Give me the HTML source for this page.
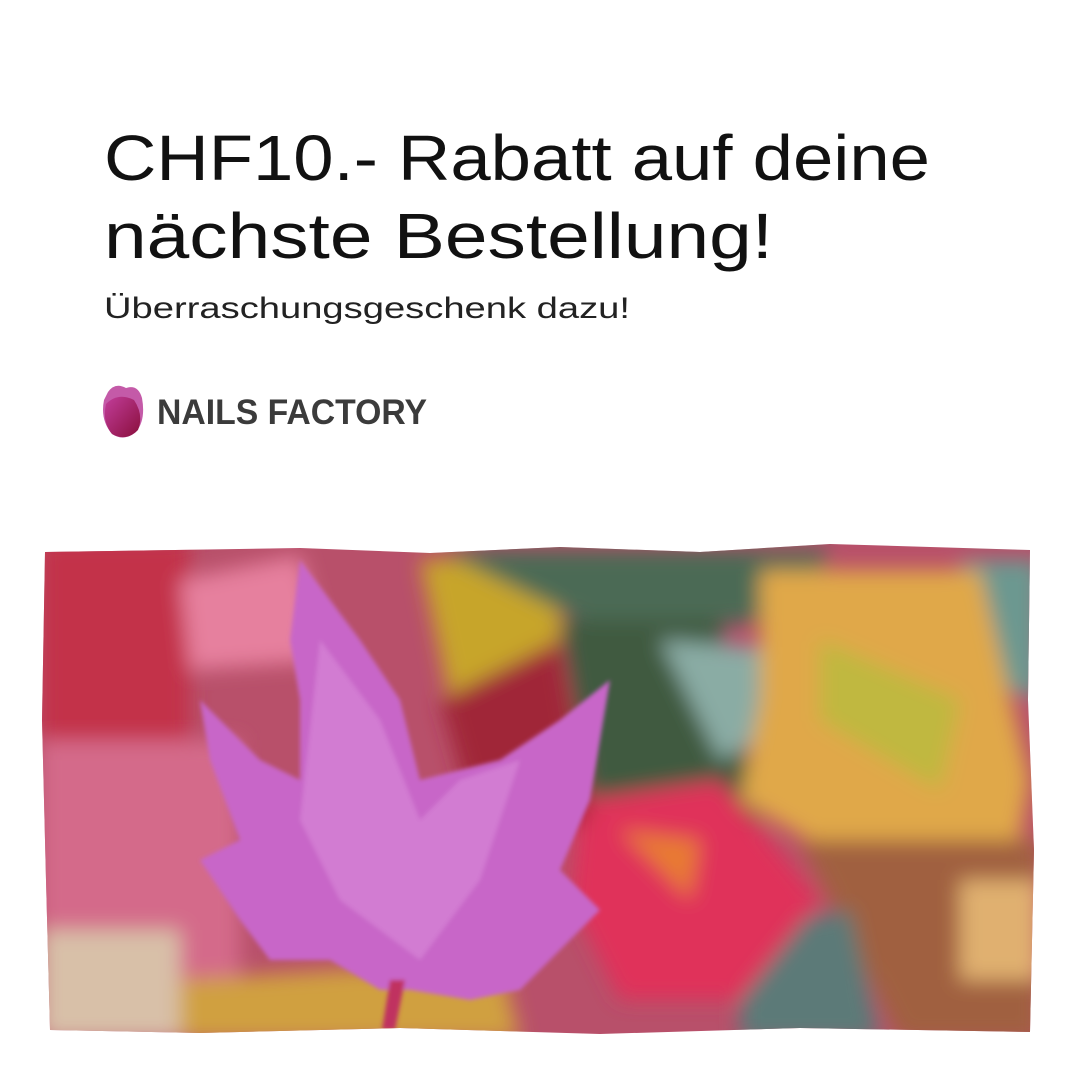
<!DOCTYPE html>
<html><head><meta charset="utf-8"><style>
html,body{margin:0;padding:0;background:#fff;}
body{width:1080px;height:1080px;overflow:hidden;position:relative;font-family:"Liberation Sans",sans-serif;}
svg{position:absolute;left:0;top:0;}
</style></head><body>
<svg width="1080" height="1080" viewBox="0 0 1080 1080">
<defs>
<filter id="b"><feGaussianBlur stdDeviation="10"/></filter>
<filter id="b2"><feGaussianBlur stdDeviation="2"/></filter>
<linearGradient id="lg" x1="0" y1="0" x2="1" y2="1"><stop offset="0" stop-color="#c13d9a"/><stop offset="1" stop-color="#8a0f3c"/></linearGradient>
<clipPath id="cp"><path d="M45 552 L300 548 L430 553 L560 547 L700 552 L830 544 L1030 550 L1028 700 L1034 850 L1030 1032 L800 1028 L600 1034 L400 1028 L200 1033 L50 1030 L46 880 L42 720 Z"/></clipPath>
</defs>
<text x="104" y="180" font-size="64" fill="#111" textLength="826" lengthAdjust="spacingAndGlyphs">CHF10.- Rabatt auf deine</text>
<text x="104" y="258" font-size="64" fill="#111" textLength="669" lengthAdjust="spacingAndGlyphs">nächste Bestellung!</text>
<text x="104" y="318" font-size="30" fill="#222" textLength="526" lengthAdjust="spacingAndGlyphs">Überraschungsgeschenk dazu!</text>
<g>
<path d="M108 392 Q115 382 126 388 Q138 384 142 398 Q146 420 136 432 Q124 442 112 434 Q100 420 104 400 Z" fill="#c45aa8"/>
<path d="M106 404 Q118 392 134 400 Q144 415 138 430 Q126 442 112 434 Q102 422 106 404 Z" fill="url(#lg)"/>
</g>
<text x="157" y="424" font-size="35" font-weight="bold" fill="#3b3b3b" textLength="270" lengthAdjust="spacingAndGlyphs">NAILS FACTORY</text>
<g clip-path="url(#cp)">
<rect x="40" y="540" width="1000" height="500" fill="#b8506a"/>
<g filter="url(#b)">
<rect x="40" y="540" width="150" height="200" fill="#c3304a"/>
<rect x="40" y="740" width="200" height="300" fill="#d46a8a"/>
<rect x="40" y="930" width="140" height="110" fill="#d8c0a8"/>
<path d="M180 580 L300 555 L330 660 L190 670 Z" fill="#e6809e"/>
<path d="M420 560 L560 560 L560 700 L450 700 Z" fill="#c7a52a"/>
<path d="M440 550 L830 550 L800 620 L600 630 Z" fill="#4c6a55"/>
<path d="M560 620 L720 620 L760 830 L600 850 Z" fill="#3f5a40"/>
<path d="M660 640 L790 650 L780 730 L720 760 Z" fill="#8aaca4"/>
<path d="M960 560 L1040 560 L1040 700 L980 680 Z" fill="#6c9890"/>
<path d="M760 570 L980 570 L1030 780 L1010 890 L880 880 L740 800 L760 700 Z" fill="#e0a848"/>
<path d="M820 640 L960 700 L940 790 L820 720 Z" fill="#c0b840"/>
<path d="M800 840 L1040 840 L1040 1040 L900 1040 Z" fill="#a06040"/>
<path d="M740 930 L850 910 L880 1040 L740 1040 Z" fill="#5c7a78"/>
<path d="M580 800 L720 780 L820 900 L740 1000 L620 1000 L570 900 Z" fill="#e0305a"/>
<path d="M620 830 L700 840 L690 900 Z" fill="#e87a30"/>
<path d="M440 700 L560 640 L590 820 L480 840 Z" fill="#a02838"/>
<path d="M180 980 L500 960 L520 1040 L180 1040 Z" fill="#d0a040"/>
<path d="M960 880 L1040 880 L1040 980 L960 980 Z" fill="#e0b070"/>
</g>
<g filter="url(#b2)">
<path d="M300 560 L360 640 L400 700 L420 780 L500 760 L560 720 L610 680 L590 800 L560 870 L600 910 L560 950 L520 990 L470 1000 L410 990 L380 990 L330 960 L270 960 L240 920 L200 860 L240 840 L210 760 L200 700 L260 760 L300 780 L300 700 L290 640 Z" fill="#c866c8"/>
<path d="M320 640 L380 720 L420 820 L460 780 L520 760 L480 880 L420 960 L340 900 L300 820 Z" fill="#d685d6" opacity="0.7"/>
<path d="M390 980 L405 980 L395 1030 L382 1030 Z" fill="#c03060"/>
</g>
</g>
</svg>
</body></html>
